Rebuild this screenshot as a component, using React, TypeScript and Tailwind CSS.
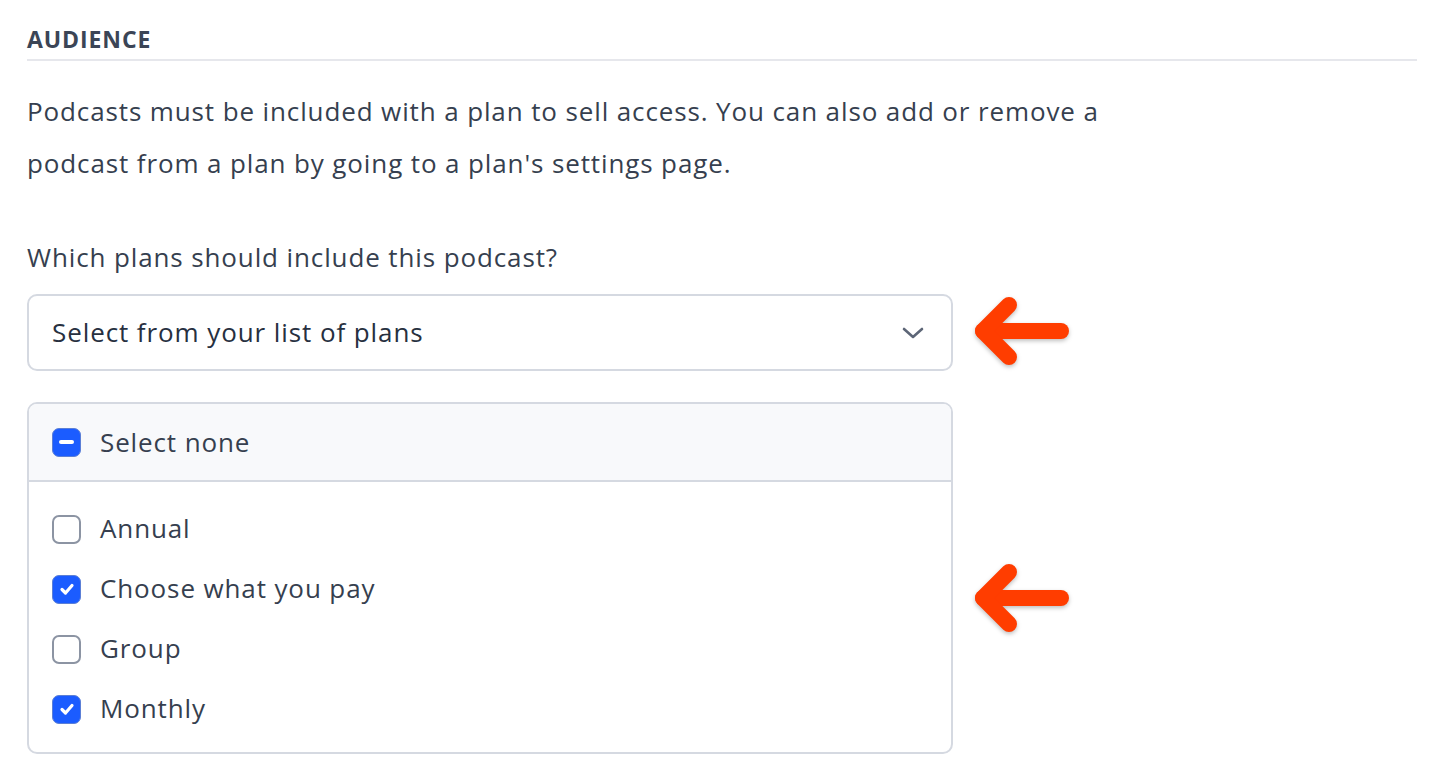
import { useState } from 'react'

const font = { fontFamily: '"Open Sans", "Liberation Sans", sans-serif' }

function Arrow() {
  return (
    <svg width="98" height="74" viewBox="0 0 98 74" className="drop-shadow-[0_2px_2px_rgba(0,0,0,0.25)]">
      <g fill="none" stroke="#ff3d00" strokeWidth="16" strokeLinecap="round" strokeLinejoin="round">
        <path d="M87 35 H9" />
        <path d="M35 9 L9 35 L35 61" />
      </g>
    </svg>
  )
}

function Box({ state }: { state: 'on' | 'off' | 'mixed' }) {
  if (state === 'off') {
    return <span className="h-[29px] w-[29px] shrink-0 rounded-[7px] border-2 border-[#8c94a3] bg-white" />
  }
  return (
    <span className="flex h-[29px] w-[29px] shrink-0 items-center justify-center rounded-[7px] border border-[#5b7fd6] bg-[#1b5cff]">
      {state === 'mixed' ? (
        <span className="h-[4px] w-[15px] rounded-full bg-white" />
      ) : (
        <svg width="20" height="20" viewBox="0 0 20 20">
          <path d="M5 10.5 L8.5 14 L15 6.5" fill="none" stroke="white" strokeWidth="3.2" strokeLinecap="round" strokeLinejoin="round" />
        </svg>
      )}
    </span>
  )
}

export default function App() {
  const [plans, setPlans] = useState([
    { name: 'Annual', on: false },
    { name: 'Choose what you pay', on: true },
    { name: 'Group', on: false },
    { name: 'Monthly', on: true },
  ])

  const toggle = (i: number) =>
    setPlans(plans.map((p, j) => (j === i ? { ...p, on: !p.on } : p)))

  return (
    <div className="min-h-screen bg-white pl-[27px] pr-[23px] pt-[24px] text-[#363f4f]" style={font}>
      <h2 className="border-b-2 border-[#e6e7ec] pb-[5px] text-[23px] font-bold uppercase leading-[30px] tracking-[0.04em] text-[#3b4556]">
        Audience
      </h2>

      <div className="tracking-[0.055em]">
        <p className="mt-[24px] max-w-[1160px] text-[26px] leading-[52px] text-[#363f4f]">
          Podcasts must be included with a plan to sell access. You can also add or remove a podcast from a plan by going to a plan's settings page.
        </p>

        <p className="mt-[50px] text-[26px] leading-[36px]">Which plans should include this podcast?</p>

        <div className="mt-[19px] flex items-center gap-[21px]">
          <button className="flex h-[77px] w-[926px] items-center justify-between rounded-[10px] border-2 border-[#d5d9e1] bg-white pl-[23px] pr-[26px] text-[26px] tracking-[0.035em] text-[#27303f]">
            <span>Select from your list of plans</span>
            <svg width="24" height="24" viewBox="0 0 24 24">
              <path d="M3 8 L12 16 L21 8" fill="none" stroke="#5d6677" strokeWidth="2.6" strokeLinecap="round" strokeLinejoin="round" />
            </svg>
          </button>
          <Arrow />
        </div>

        <div className="mt-[31px] flex items-start gap-[21px]">
          <div className="w-[926px] overflow-hidden rounded-[10px] border-2 border-[#d5d9e1]">
            <div className="flex h-[78px] items-center gap-[19px] border-b-2 border-[#d5d9e1] bg-[#f8f9fb] px-[23px] text-[26px]">
              <Box state="mixed" />
              <span>Select none</span>
            </div>
            <ul className="pb-[13px] pt-[17px]">
              {plans.map((p, i) => (
                <li
                  key={p.name}
                  onClick={() => toggle(i)}
                  className="flex h-[60px] cursor-pointer items-center gap-[19px] px-[23px] text-[26px]"
                >
                  <Box state={p.on ? 'on' : 'off'} />
                  <span className="-mt-[2px]">{p.name}</span>
                </li>
              ))}
            </ul>
          </div>
          <div className="mt-[161px]">
            <Arrow />
          </div>
        </div>
      </div>
    </div>
  )
}
